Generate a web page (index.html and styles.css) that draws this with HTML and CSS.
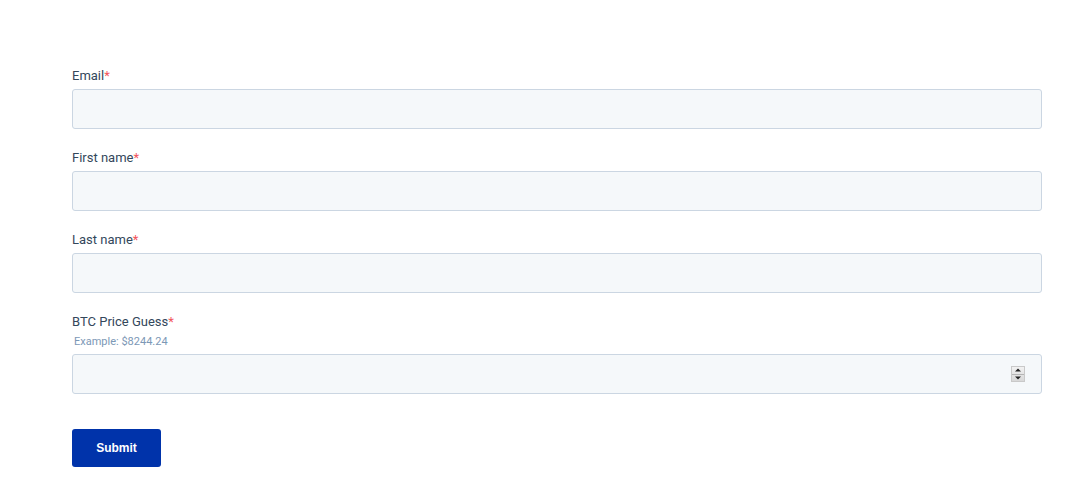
FILE: index.html
```html
<!DOCTYPE html>
<html>
<head>
<meta charset="utf-8">
<link rel="stylesheet" href="styles.css">
</head>
<body>
<form class="form">
  <div class="field">
    <label class="label">Email<span class="req">*</span></label>
    <input class="input" type="text">
  </div>
  <div class="field">
    <label class="label">First name<span class="req">*</span></label>
    <input class="input" type="text">
  </div>
  <div class="field">
    <label class="label">Last name<span class="req">*</span></label>
    <input class="input" type="text">
  </div>
  <div class="field">
    <label class="label">BTC Price Guess<span class="req">*</span></label>
    <div class="hint">Example: $8244.24</div>
    <div class="num-wrap">
      <input class="input" type="text">
      <span class="spinner"><span class="spin-up"></span><span class="spin-down"></span></span>
    </div>
  </div>
  <div class="actions">
    <button class="submit" type="button">Submit</button>
  </div>
</form>
</body>
</html>
```
FILE: styles.css
```css
html, body {
  margin: 0;
  padding: 0;
  background: #fff;
}
body {
  font-family: Roboto, "Liberation Sans", Arial, sans-serif;
}
.form {
  width: 970px;
  padding: 68px 0 0 72px;
}
.field {
  display: flex;
  flex-direction: column;
  margin-bottom: 21px;
}
.label {
  font-size: 13px;
  line-height: 16px;
  color: #33475b;
  margin-bottom: 5px;
}
.req {
  color: #f2545b;
}
.hint {
  font-size: 11px;
  line-height: 14px;
  color: #7c98b6;
  margin: 0 0 5px 2px;
}
.input {
  box-sizing: border-box;
  width: 970px;
  height: 40px;
  margin: 0;
  background: #f5f8fa;
  border: 1px solid #cbd6e2;
  border-radius: 3px;
  outline: none;
  font-family: inherit;
  font-size: 14px;
  padding: 0 15px;
  display: block;
}
.num-wrap {
  position: relative;
  width: 970px;
}
.spinner {
  position: absolute;
  left: 939px;
  top: 12px;
  width: 14px;
  height: 16px;
  display: flex;
  flex-direction: column;
  background: linear-gradient(#f2f2f2, #d8d8d8);
  border: 1px solid #c9c9c9;
  box-sizing: border-box;
}
.spin-up, .spin-down {
  flex: 1;
  position: relative;
}
.spin-up {
  border-bottom: 1px solid #b5b5b5;
}
.spin-up::after, .spin-down::after {
  content: "";
  position: absolute;
  left: 50%;
  top: 50%;
  transform: translate(-50%, -50%);
  border-left: 3px solid transparent;
  border-right: 3px solid transparent;
}
.spin-up::after {
  border-bottom: 3px solid #222;
}
.spin-down::after {
  border-top: 3px solid #222;
}
.actions {
  padding-top: 14px;
}
.submit {
  width: 89px;
  height: 38px;
  background: #0033aa;
  color: #fff;
  border: none;
  border-radius: 3px;
  font-family: "Liberation Sans", Arial, sans-serif;
  font-weight: bold;
  font-size: 12px;
  padding: 0;
  cursor: pointer;
}
```
